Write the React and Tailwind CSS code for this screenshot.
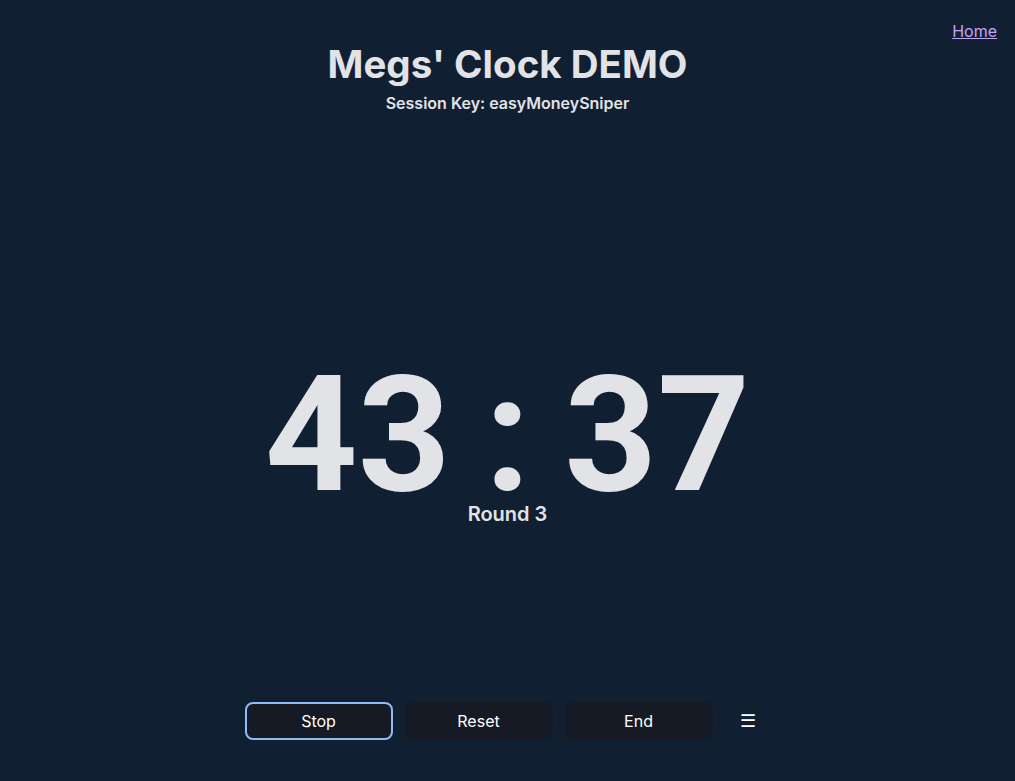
export default function App() {
  return (
    <div className="relative flex h-screen w-full flex-col bg-[#111f33] text-[#e1e3e6]" style={{ fontFamily: "Inter, 'Noto Sans', sans-serif" }}>
      <a href="#" className="absolute right-[18px] top-[19px] text-base text-[#c4a5f5] underline">Home</a>
      <header className="flex flex-col items-center pt-[40px]">
        <h1 className="text-[38.5px] font-bold leading-[48px]">Megs' Clock DEMO</h1>
        <p className="mt-[3px] text-base font-semibold leading-6">Session Key: easyMoneySniper</p>
      </header>
      <main className="flex flex-1 flex-col items-center justify-center pt-[82px]">
        <div className="flex items-center text-[162px] font-bold leading-[126px]" style={{ fontFamily: "Roboto, 'Liberation Sans', sans-serif" }}>
          <span>43</span>
          <span className="mx-[34px]">:</span>
          <span>37</span>
        </div>
        <p className="mt-[2px] text-xl font-semibold leading-7">Round 3</p>
      </main>
      <footer className="flex items-center justify-center gap-3 pb-[41px]">
        <button className="h-[38px] w-[148px] rounded-lg border-2 border-[#8fbcf5] bg-[#151a24] text-base text-white">Stop</button>
        <button className="h-[38px] w-[148px] rounded-lg bg-[#151a24] text-base text-white">Reset</button>
        <button className="h-[38px] w-[148px] rounded-lg bg-[#151a24] text-base text-white">End</button>
        <button className="w-[46px] text-center text-lg text-white">☰</button>
      </footer>
    </div>
  );
}
